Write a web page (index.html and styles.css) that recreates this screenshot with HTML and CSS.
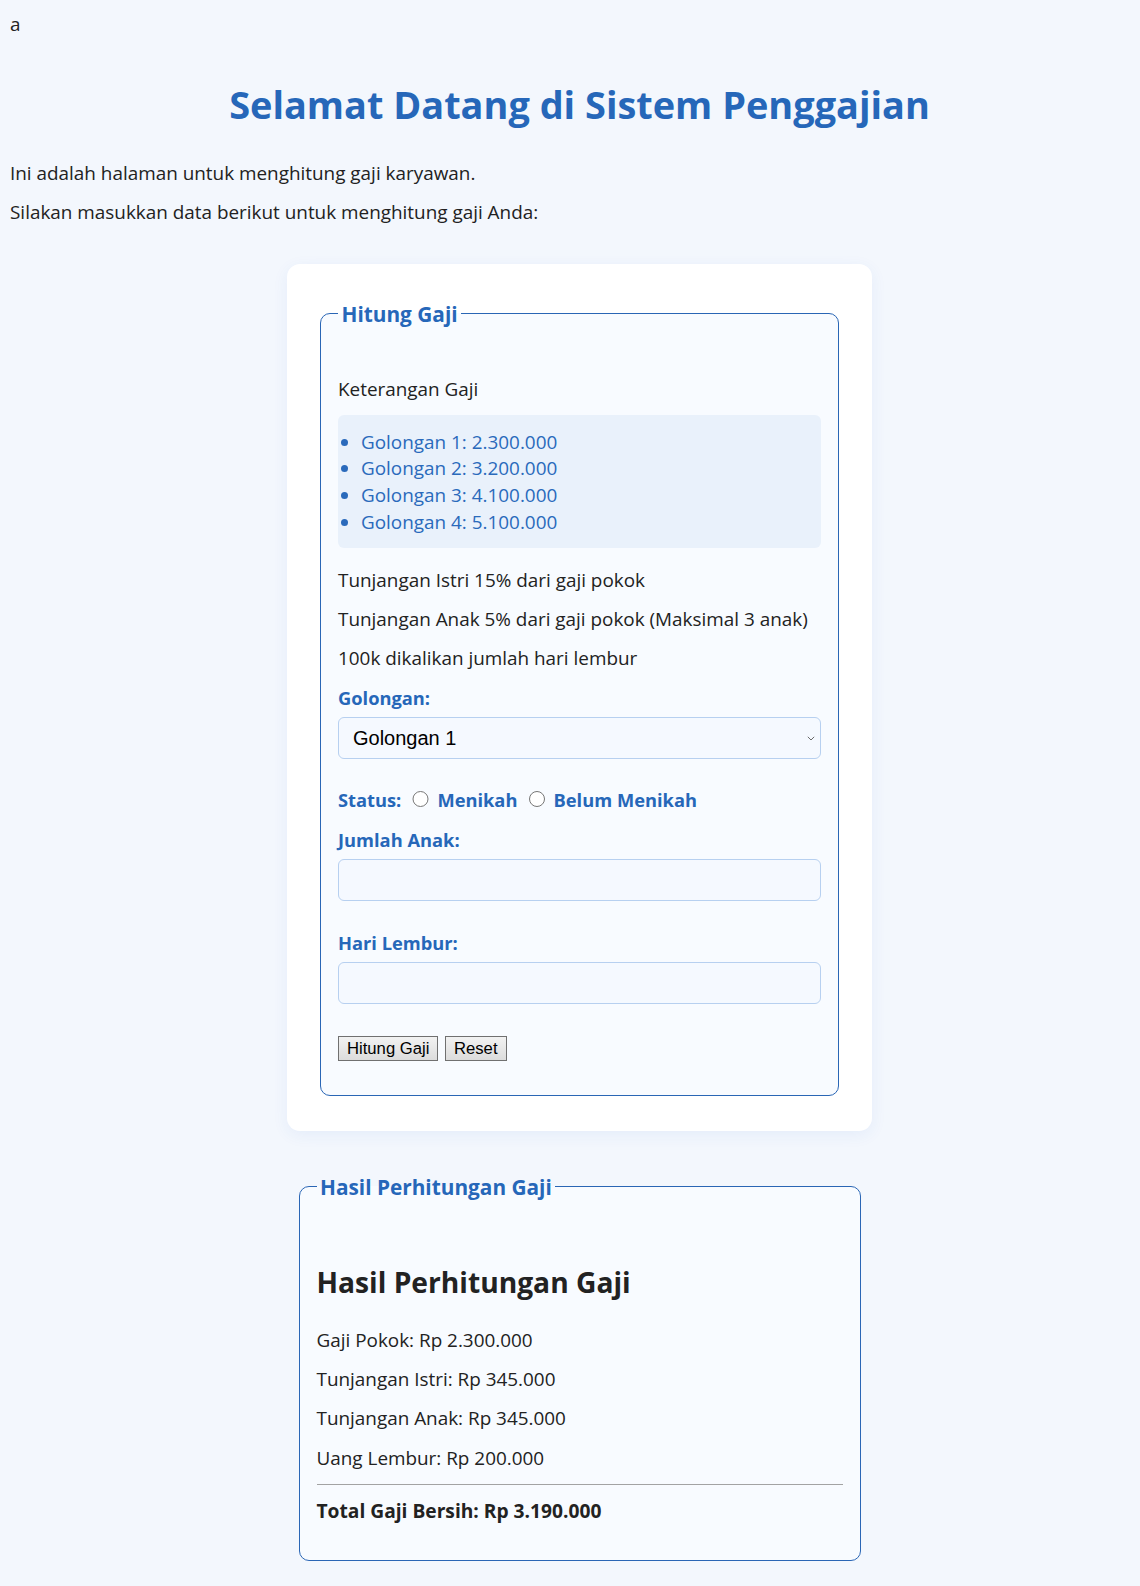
FILE: index.html
```html
<!DOCTYPE html>
<html lang="id">
<head>
<meta charset="utf-8">
<title>Sistem Penggajian</title>
<link rel="stylesheet" href="styles.css">
</head>
<body>
<div class="stray">a</div>
<h1 class="title">Selamat Datang di Sistem Penggajian</h1>
<p class="intro">Ini adalah halaman untuk menghitung gaji karyawan.</p>
<p class="intro intro-last">Silakan masukkan data berikut untuk menghitung gaji Anda:</p>
<main class="main">
  <section class="card">
    <form class="form">
      <fieldset class="box box-form">
        <legend class="legend">Hitung Gaji</legend>
        <p class="text">Keterangan Gaji</p>
        <ul class="grades">
          <li>Golongan 1: 2.300.000</li>
          <li>Golongan 2: 3.200.000</li>
          <li>Golongan 3: 4.100.000</li>
          <li>Golongan 4: 5.100.000</li>
        </ul>
        <p class="text">Tunjangan Istri 15% dari gaji pokok</p>
        <p class="text">Tunjangan Anak 5% dari gaji pokok (Maksimal 3 anak)</p>
        <p class="text">100k dikalikan jumlah hari lembur</p>
        <label class="field-label" for="golongan">Golongan:</label>
        <div class="select-wrap">
          <select id="golongan" class="select">
            <option>Golongan 1</option>
            <option>Golongan 2</option>
            <option>Golongan 3</option>
            <option>Golongan 4</option>
          </select>
          <svg class="chev" viewBox="0 0 8 5" width="8" height="5" aria-hidden="true"><path d="M0.8 0.8 L4 4 L7.2 0.8" fill="none" stroke="#6b6b6b" stroke-width="1"/></svg>
        </div>
        <div class="status-row"><span class="inline-label">Status:</span> <input class="radio" type="radio" name="status" id="menikah"> <label class="inline-label" for="menikah">Menikah</label> <input class="radio" type="radio" name="status" id="belum"> <label class="inline-label" for="belum">Belum Menikah</label></div>
        <label class="field-label" for="anak">Jumlah Anak:</label>
        <input class="input" type="number" id="anak">
        <label class="field-label" for="lembur">Hari Lembur:</label>
        <input class="input input-last" type="number" id="lembur">
        <div class="actions">
          <button class="btn" type="button">Hitung Gaji</button>
          <button class="btn" type="reset">Reset</button>
        </div>
      </fieldset>
    </form>
  </section>
  <fieldset class="box box-result">
    <legend class="legend">Hasil Perhitungan Gaji</legend>
    <h2 class="result-title">Hasil Perhitungan Gaji</h2>
    <p class="text">Gaji Pokok: Rp 2.300.000</p>
    <p class="text">Tunjangan Istri: Rp 345.000</p>
    <p class="text">Tunjangan Anak: Rp 345.000</p>
    <p class="text">Uang Lembur: Rp 200.000</p>
    <hr class="divider">
    <p class="total">Total Gaji Bersih: Rp 3.190.000</p>
  </fieldset>
</main>
</body>
</html>
```

FILE: styles.css
```css
body {
  margin: 11px 10px 10px;
  font-family: "Open Sans", "Noto Sans", sans-serif;
  font-size: 18.9px;
  line-height: 26.6px;
  color: #222222;
  background: #f3f7fd;
}

.title {
  margin: 40px 0 29px;
  padding-left: 19px;
  text-align: center;
  font-size: 37.9px;
  line-height: 53.2px;
  font-weight: 700;
  color: #2667b9;
}

.intro {
  margin: 0 0 12.5px;
}

.intro-last {
  margin-bottom: 0;
}

.main {
  padding-left: 19px;
  margin-top: 38.2px;
}

.card {
  width: 585px;
  box-sizing: border-box;
  margin: 0 auto;
  background: #ffffff;
  border-radius: 13px;
  padding: 35px 33px 35px;
  box-shadow: 0 4px 16px rgba(40, 100, 210, 0.07);
}

.form {
  margin: 0;
}

.box {
  margin: 0;
  min-width: 0;
  border: 1px solid #2a66b5;
  border-radius: 10px;
  background: #f8fbff;
}

.box-form {
  padding: 47.7px 17px 34.7px;
}

.legend {
  padding: 0 3.5px;
  font-size: 20.8px;
  line-height: 30px;
  font-weight: 700;
  color: #2667b9;
}

.text {
  margin: 0 0 12.5px;
}

.grades {
  margin: 0 0 19px;
  padding: 13.4px 0 13px 23px;
  background: #e9f1fb;
  border-radius: 6px;
  color: #2a6abb;
  list-style: disc;
}

.field-label {
  display: block;
  margin: 0 0 5.5px;
  font-size: 18.3px;
  font-weight: 700;
  color: #2667b9;
}

.select-wrap {
  position: relative;
  margin-bottom: 28px;
}

.select {
  display: block;
  width: 100%;
  height: 42.6px;
  box-sizing: border-box;
  margin: 0;
  padding: 0 30px 0 14px;
  border: 1px solid #b7d0f0;
  border-radius: 6px;
  background: #f5f9ff;
  font-family: "Liberation Sans", Arial, sans-serif;
  font-size: 20px;
  color: #000000;
  appearance: none;
  -webkit-appearance: none;
}

.chev {
  position: absolute;
  right: 6px;
  top: 50%;
  margin-top: -2px;
}

.status-row {
  margin: 0 0 13.4px;
}

.inline-label {
  font-size: 18.3px;
  font-weight: 700;
  color: #2667b9;
}

.radio {
  width: 16.25px;
  height: 16.25px;
  margin: 3.75px 3.75px 0 6.25px;
  vertical-align: baseline;
}

.input {
  display: block;
  width: 100%;
  height: 41.4px;
  box-sizing: border-box;
  margin: 0 0 29.4px;
  padding: 0 10px;
  border: 1px solid #b7d0f0;
  border-radius: 6px;
  background: #f5f9ff;
  font-size: 20px;
}

.input-last {
  margin-bottom: 32.1px;
}

.actions {
  display: flex;
  gap: 6.6px;
}

.btn {
  height: 25px;
  margin: 0;
  padding: 0 8px;
  border: 1px solid #707070;
  border-radius: 0;
  background: linear-gradient(#f2f2f2, #dcdcdc);
  font-family: "Liberation Sans", Arial, sans-serif;
  font-size: 16.67px;
  line-height: 23px;
  color: #000000;
}

.box-result {
  width: 562px;
  box-sizing: border-box;
  margin: 40.6px auto 0;
  padding: 0 17px 35px;
}

.result-title {
  margin: 59.7px 0 25.7px;
  font-size: 28.2px;
  line-height: 40px;
  font-weight: 700;
  color: #222222;
}

.divider {
  height: 0;
  margin: 13.2px 0 13px;
  border: 0;
  border-top: 1px solid #a3a3a3;
}

.total {
  margin: 0;
  font-size: 19.2px;
  font-weight: 700;
}
```
